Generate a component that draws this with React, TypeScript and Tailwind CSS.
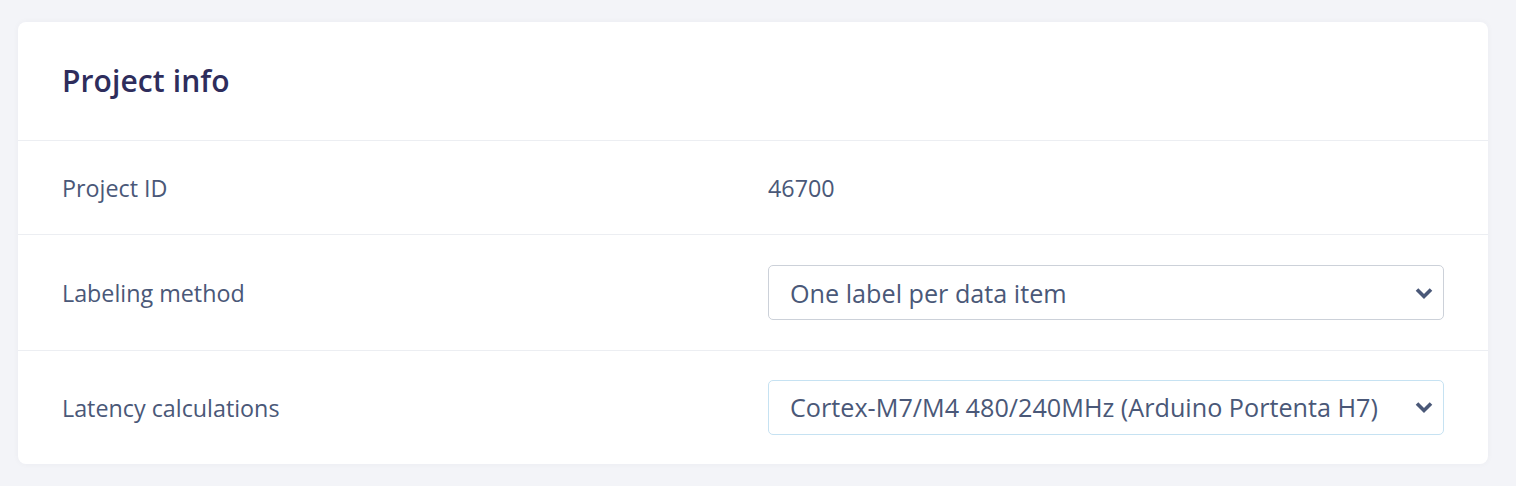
import React from "react";

const Chevron = () => (
  <svg width="20" height="14" viewBox="0 0 20 14" className="shrink-0">
    <polyline points="3,3.5 10,10.5 17,3.5" fill="none" stroke="#4a5878" strokeWidth="3.6" strokeLinejoin="miter" />
  </svg>
);

const Select = ({ text, focused }: { text: string; focused?: boolean }) => (
  <div
    className={`flex-1 h-[55px] rounded-[5px] border-[1.5px] ${
      focused ? "border-[#c6e2f2]" : "border-[#ccd1d9]"
    } bg-white flex items-center justify-between pl-[21px] pr-[9px]`}
  >
    <span className="text-[25.2px] text-[#4a5878] leading-none pt-[2px]">{text}</span>
    <Chevron />
  </div>
);

export default function App() {
  return (
    <div
      className="w-[1516px] h-[486px] bg-[#f3f4f8] pt-[22px] pl-[18px]"
      style={{ fontFamily: '"Open Sans", "Noto Sans", sans-serif' }}
    >
      <div className="w-[1470px] bg-white rounded-[8px] shadow-[0_0_6px_rgba(30,40,80,0.04)]">
        <div className="h-[119px] flex items-center pl-[44px] border-b-[1.5px] border-[#eceef2]">
          <h1 className="text-[30px] font-semibold text-[#2e2d5c] leading-none tracking-[0.1px] pb-[1px]">
            Project info
          </h1>
        </div>
        <div className="h-[94px] flex items-center px-[44px] border-b-[1.5px] border-[#eceef2]">
          <div className="w-[706px] text-[23.3px] text-[#4a5878] pt-[2px]">Project ID</div>
          <div className="text-[23.3px] text-[#4a5878] pt-[2px]">46700</div>
        </div>
        <div className="h-[116px] flex items-center px-[44px] border-b-[1.5px] border-[#eceef2]">
          <div className="w-[706px] text-[23.3px] text-[#4a5878] pt-[2px]">Labeling method</div>
          <Select text="One label per data item" />
        </div>
        <div className="h-[113px] flex items-center px-[44px] pb-[1px]">
          <div className="w-[706px] text-[23.3px] text-[#4a5878] pt-[2px]">Latency calculations</div>
          <Select text="Cortex-M7/M4 480/240MHz (Arduino Portenta H7)" focused />
        </div>
      </div>
    </div>
  );
}
